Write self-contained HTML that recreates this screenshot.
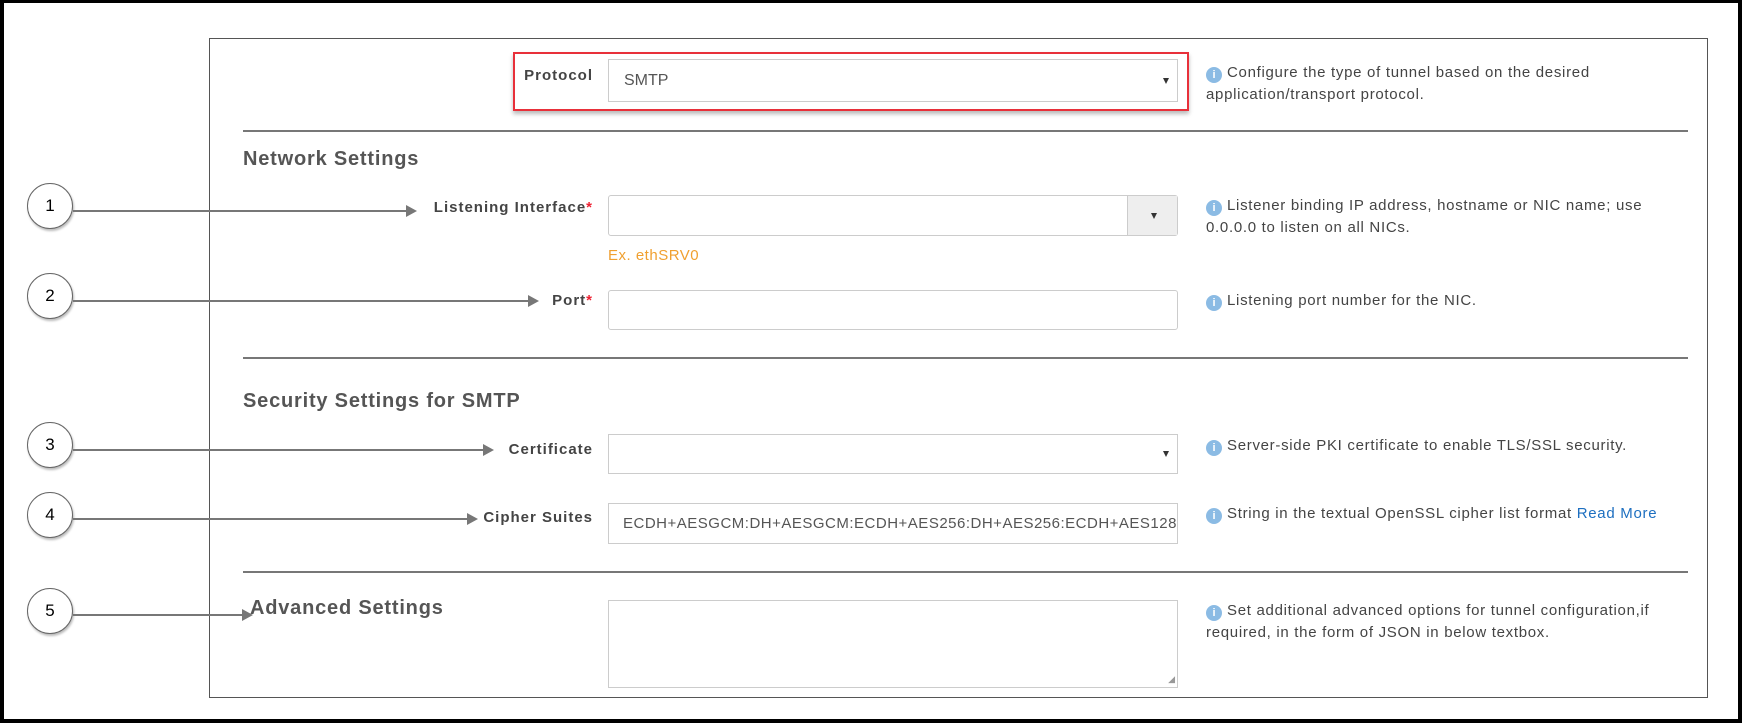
<!DOCTYPE html>
<html><head><meta charset="utf-8"><style>
*{box-sizing:border-box}
body{margin:0;width:1742px;height:723px;background:#fff;font-family:"Liberation Sans",sans-serif;color:#444;position:relative;overflow:hidden}
.a{position:absolute}
.frame{left:0;top:0;width:1742px;height:723px;border:4px solid #000;border-top-width:3px}
.panel{left:209px;top:38px;width:1499px;height:660px;border:1.5px solid #555}
.hr{left:243px;width:1445px;height:2px;background:#777}
.lbl{font-weight:bold;font-size:15px;color:#444;text-align:right;width:400px;letter-spacing:1px}
.star{color:#e23}
.inp{left:608px;width:570px;border:1px solid #ccc;background:#fff}
.help{left:1206px;font-size:15px;color:#444;line-height:22px;width:500px;letter-spacing:0.7px}
.i{display:inline-block;width:16px;height:16px;border-radius:50%;background:#8bbbe4;color:#fff;font-size:11px;font-weight:bold;text-align:center;line-height:16px;margin-right:5px;vertical-align:-1px;letter-spacing:0}
.h{font-size:20px;font-weight:bold;color:#555;left:243px;letter-spacing:0.8px}
.circ{left:27px;width:46px;height:46px;border-radius:50%;border:1px solid #666;background:#fff;text-align:center;line-height:44px;font-size:17px;color:#000;box-shadow:1px 2px 2px #bbb}
.arr{left:73px;height:2px;background:#777}
.arr:after{content:"";position:absolute;right:-10px;top:-5px;border-left:11px solid #777;border-top:6px solid transparent;border-bottom:6px solid transparent}
.caret{position:absolute;right:8px;top:50%;margin-top:-3px;border-top:6px solid #333;border-left:3.5px solid transparent;border-right:3.5px solid transparent}
</style></head><body>
<div class="a frame"></div>
<div class="a panel"></div>

<div class="a" style="left:513px;top:52px;width:676px;height:59px;border:2px solid #e8303a;box-shadow:0 3px 4px #bbb"></div>
<div class="a lbl" style="left:193px;top:67px">Protocol</div>
<div class="a inp" style="top:59px;height:43px;font-size:16px;color:#555;padding:12px 0 0 15px">SMTP<span class="caret"></span></div>
<div class="a help" style="top:62px"><span class="i">i</span>Configure the type of tunnel based on the desired<br>application/transport protocol.</div>

<div class="a hr" style="top:130px"></div>
<div class="a h" style="top:148px">Network Settings</div>

<div class="a circ" style="top:183px">1</div>
<div class="a arr" style="top:210px;width:334px"></div>
<div class="a lbl" style="left:193px;top:199px">Listening Interface<span class="star">*</span></div>
<div class="a inp" style="top:195px;height:41px;border-radius:3px"><div style="position:absolute;right:0;top:0;width:50px;height:39px;background:#eee;border-left:1px solid #ccc"><span class="caret" style="right:20px"></span></div></div>
<div class="a" style="left:608px;top:247px;font-size:15px;color:#f0a030;letter-spacing:0.5px">Ex. ethSRV0</div>
<div class="a help" style="top:195px"><span class="i">i</span>Listener binding IP address, hostname or NIC name; use<br>0.0.0.0 to listen on all NICs.</div>

<div class="a circ" style="top:273px">2</div>
<div class="a arr" style="top:300px;width:456px"></div>
<div class="a lbl" style="left:193px;top:292px">Port<span class="star">*</span></div>
<div class="a inp" style="top:290px;height:40px;border-radius:3px"></div>
<div class="a help" style="top:290px"><span class="i">i</span>Listening port number for the NIC.</div>

<div class="a hr" style="top:357px"></div>
<div class="a h" style="top:390px">Security Settings for SMTP</div>

<div class="a circ" style="top:422px">3</div>
<div class="a arr" style="top:449px;width:411px"></div>
<div class="a lbl" style="left:193px;top:441px">Certificate</div>
<div class="a inp" style="top:434px;height:40px"><span class="caret"></span></div>
<div class="a help" style="top:435px"><span class="i">i</span>Server-side PKI certificate to enable TLS/SSL security.</div>

<div class="a circ" style="top:492px">4</div>
<div class="a arr" style="top:518px;width:395px"></div>
<div class="a lbl" style="left:193px;top:509px">Cipher Suites</div>
<div class="a inp" style="top:503px;height:41px;font-size:15px;color:#555;padding:11px 0 0 14px;white-space:nowrap;overflow:hidden;letter-spacing:0.5px">ECDH+AESGCM:DH+AESGCM:ECDH+AES256:DH+AES256:ECDH+AES128</div>
<div class="a help" style="top:503px"><span class="i">i</span>String in the textual OpenSSL cipher list format <span style="color:#1d6fc0">Read More</span></div>

<div class="a hr" style="top:571px"></div>
<div class="a circ" style="top:588px">5</div>
<div class="a arr" style="top:614px;width:170px"></div>
<div class="a h" style="left:250px;top:597px">Advanced Settings</div>
<div class="a inp" style="top:600px;height:88px"><span style="position:absolute;right:2px;bottom:2px;font-size:9px;color:#999">◢</span></div>
<div class="a help" style="top:600px"><span class="i">i</span>Set additional advanced options for tunnel configuration,if<br>required, in the form of JSON in below textbox.</div>
</body></html>
